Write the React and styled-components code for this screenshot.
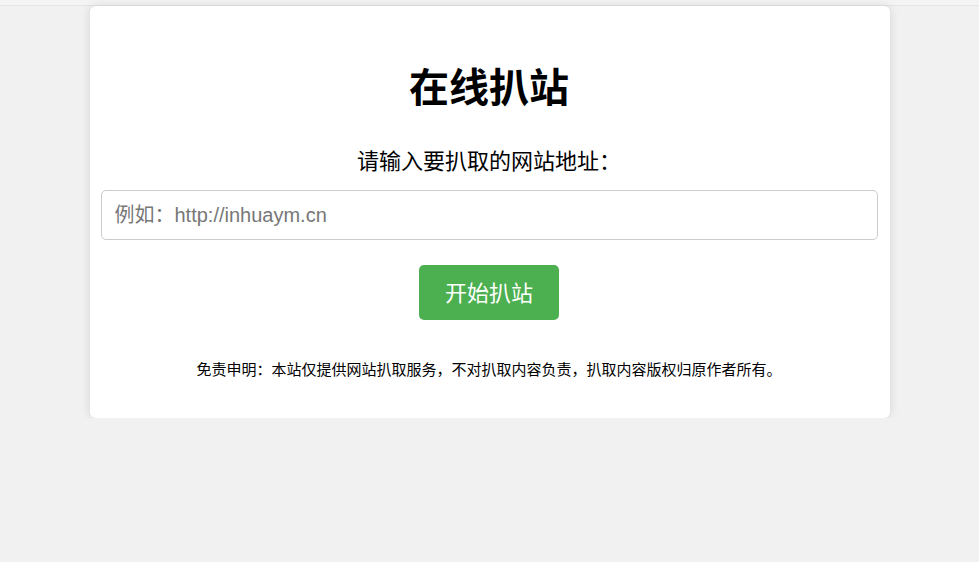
import React from "react";
import styled, { createGlobalStyle } from "styled-components";

const GlobalStyle = createGlobalStyle`
  html, body { margin: 0; padding: 0; }
  body {
    background: #f1f1f1;
    font-family: "Liberation Sans", "Noto Sans CJK SC", sans-serif;
    color: #000;
  }
`;

const TopStrip = styled.div`
  height: 5px;
  background: #f4f4f4;
  border-bottom: 1px solid #e6e6e6;
`;

const Card = styled.div`
  width: 800px;
  margin: 0 auto;
  box-sizing: border-box;
  background: #fff;
  border-radius: 6px;
  box-shadow: 0 0 10px rgba(0, 0, 0, 0.12);
  padding: 55px 12px 39px 11px;
  display: flex;
  flex-direction: column;
  align-items: center;
`;

const Title = styled.h1`
  margin: 0;
  font-family: "Noto Sans CJK SC", sans-serif;
  font-size: 40px;
  line-height: 48px;
  font-weight: 700;
`;

const Label = styled.label`
  margin-top: 35px;
  font-family: "Noto Sans CJK SC", sans-serif;
  font-size: 22px;
  line-height: 30px;
`;

const Input = styled.input`
  margin-top: 16px;
  width: 100%;
  height: 50px;
  box-sizing: border-box;
  border: 1px solid #ccc;
  border-radius: 5px;
  padding: 0 13px;
  font-family: "Liberation Sans", "Noto Sans CJK SC", sans-serif;
  font-size: 20px;
  outline: none;
  &::placeholder { color: #777; }
`;

const Button = styled.button`
  margin-top: 25px;
  width: 140px;
  height: 55px;
  border: none;
  border-radius: 5px;
  background: #4caf50;
  color: #fff;
  font-family: "Noto Sans CJK SC", sans-serif;
  font-size: 22px;
  line-height: 30px;
  padding: 0 0 3px;
  cursor: pointer;
`;

const Disclaimer = styled.p`
  margin: 39px 0 0;
  font-family: "Noto Sans CJK SC", sans-serif;
  font-size: 15px;
  line-height: 20px;
`;

export default function App() {
  return (
    <>
      <GlobalStyle />
      <TopStrip />
      <Card>
        <Title>在线扒站</Title>
        <Label htmlFor="url">请输入要扒取的网站地址：</Label>
        <Input id="url" type="text" placeholder="例如：http://inhuaym.cn" />
        <Button>开始扒站</Button>
        <Disclaimer>免责申明：本站仅提供网站扒取服务，不对扒取内容负责，扒取内容版权归原作者所有。</Disclaimer>
      </Card>
    </>
  );
}
